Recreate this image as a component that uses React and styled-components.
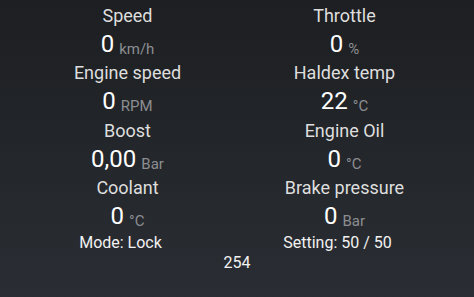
import React from "react";
import styled, { createGlobalStyle } from "styled-components";

const Global = createGlobalStyle`
  html, body { margin: 0; padding: 0; }
  body {
    width: 474px;
    height: 297px;
    overflow: hidden;
    background: #1e2023;
    font-family: Roboto, "Noto Sans", sans-serif;
  }
`;

const Screen = styled.div`
  width: 474px;
  height: 297px;
  box-sizing: border-box;
  padding-top: 4px;
  background: linear-gradient(180deg, #1d1f22 0%, #23262a 50%, #2a2d33 100%);
  display: flex;
  flex-direction: column;
`;

const GaugeGrid = styled.div`
  display: grid;
  grid-template-columns: 217px 217px;
  padding-left: 19px;
`;

const Gauge = styled.div`
  display: flex;
  flex-direction: column;
  align-items: center;
`;

const Label = styled.div`
  font-size: 18px;
  line-height: 24px;
  height: 24px;
  color: #dedede;
  white-space: nowrap;
`;

const ValueRow = styled.div`
  display: flex;
  align-items: baseline;
  height: 33.3px;
  font-size: 24px;
  line-height: 33.3px;
  color: #ffffff;
  white-space: nowrap;
`;

const Unit = styled.span`
  font-size: 15px;
  line-height: 15px;
  color: #8c8e92;
  margin-left: 5px;
  position: relative;
  top: 2px;
`;

const StatusGrid = styled.div`
  display: grid;
  grid-template-columns: 217px 217px;
  padding-left: 12px;
`;

const Status = styled.div`
  text-align: center;
  font-size: 16px;
  line-height: 20px;
  color: #f2f2f2;
  white-space: nowrap;
`;

const Counter = styled.div`
  text-align: center;
  font-size: 16px;
  line-height: 20px;
  color: #f2f2f2;
`;

const gauges = [
  ["Speed", "0", "km/h"],
  ["Throttle", "0", "%"],
  ["Engine speed", "0", "RPM"],
  ["Haldex temp", "22", "°C"],
  ["Boost", "0,00", "Bar"],
  ["Engine Oil", "0", "°C"],
  ["Coolant", "0", "°C"],
  ["Brake pressure", "0", "Bar"],
];

export default function App() {
  return (
    <>
      <Global />
      <Screen>
        <GaugeGrid>
          {gauges.map(([label, value, unit]) => (
            <Gauge key={label}>
              <Label>{label}</Label>
              <ValueRow>
                {value}
                <Unit>{unit}</Unit>
              </ValueRow>
            </Gauge>
          ))}
        </GaugeGrid>
        <StatusGrid>
          <Status>Mode: Lock</Status>
          <Status>Setting: 50 / 50</Status>
        </StatusGrid>
        <Counter>254</Counter>
      </Screen>
    </>
  );
}
